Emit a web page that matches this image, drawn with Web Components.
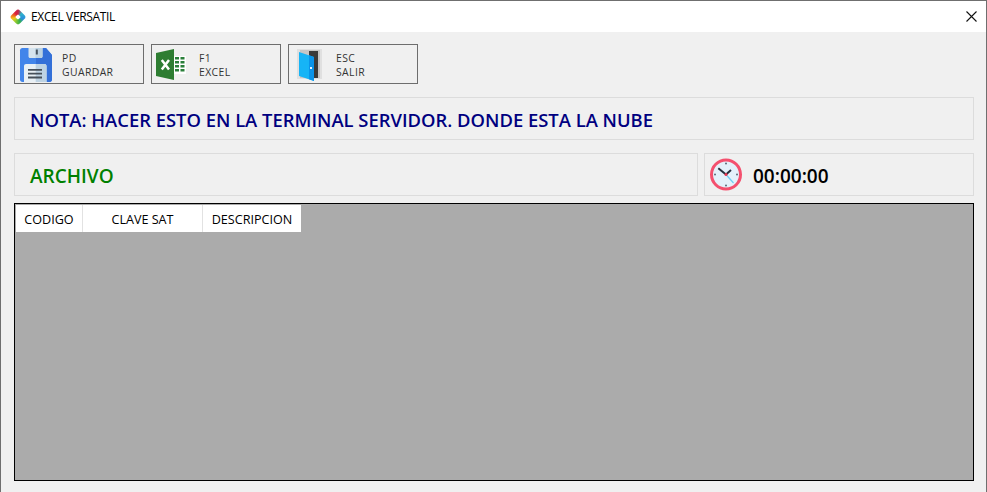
<!DOCTYPE html>
<html lang="es">
<head>
<meta charset="utf-8">
<title>EXCEL VERSATIL</title>
<style>
    html, body { margin: 0; height: 100%; }
    body { font-family: "Open Sans", "Noto Sans", sans-serif; background: #f0f0f0; }
</style>
</head>
<body>
<app-window>
    <title-bar slot="title">EXCEL VERSATIL</title-bar>
    <div slot="tools" style="display:flex;gap:7px">
        <tool-button key="PD" label="GUARDAR" icon="save"></tool-button>
        <tool-button key="F1" label="EXCEL" icon="excel"></tool-button>
        <tool-button key="ESC" label="SALIR" icon="door"></tool-button>
    </div>
    <info-panel slot="note" color="#000080">NOTA: HACER ESTO EN LA TERMINAL SERVIDOR. DONDE ESTA LA NUBE</info-panel>
    <info-panel slot="file" color="#008000" wide>ARCHIVO</info-panel>
    <clock-panel slot="clock">00:00:00</clock-panel>
    <data-grid slot="grid"></data-grid>
</app-window>

<script>
const icons = {
    save: `<svg width="34" height="36" viewBox="0 0 34 36">
        <g transform="translate(1 2)">
        <path d="M0 2.500C0 1.100 1 0 2.400 0H26l6 7v24.500c0 1.400-1 2.500-2.400 2.500H2.400C1 34 0 32.900 0 31.500z" fill="#4285ea"/>
        <path d="M16 0h10l6 7v24.500c0 1.400-1 2.500-2.400 2.500H16z" fill="#3470d8"/>
        <path d="M8.500 0h14v8.500c0 .9-.7 1.500-1.500 1.500H10c-.8 0-1.500-.6-1.500-1.500z" fill="#d6e4ee"/>
        <path d="M15.500 0h7v8.500c0 .9-.7 1.500-1.500 1.500h-5.500z" fill="#bcd2e2"/>
        <rect x="15.800" y="1.500" width="2" height="5" fill="#47535f"/>
        <path d="M4 34V18c0-1.100.9-2 2-2h18.500c1.100 0 2 .9 2 2v16z" fill="#e9f0f5"/>
        <path d="M15.700 16h8.800c1.100 0 2 .9 2 2v16H15.700z" fill="#bed3e3"/>
        <path d="M8 21h14v1.800H8zM8 24.800h14v1.800H8zM8 28.600h14v1.800H8z" fill="#47505a"/>
        </g>
    </svg>`,
    excel: `<svg width="31" height="32" viewBox="0 0 31 32">
        <path d="M18 8h12v18H18z" fill="#fff"/>
        <path d="M19 9h4v2.400h-4zM24.500 9h4v2.400h-4zM19 13h4v2.400h-4zM24.500 13h4v2.400h-4zM19 17h4v2.400h-4zM24.500 17h4v2.400h-4zM19 21h4v2.400h-4zM24.500 21h4v2.400h-4z" fill="#2a7f3a"/>
        <path d="M0 5 18 1v31L0 28z" fill="#2e7d32"/>
        <path d="M5.800 12 13 21.500M13 12 5.800 21.500" stroke="#fff" stroke-width="2.500" fill="none"/>
    </svg>`,
    door: `<svg width="30" height="34" viewBox="0 0 30 34">
        <rect x="4" y="2" width="25" height="30" fill="#e0e0e0"/>
        <rect x="7" y="3" width="20" height="28" fill="#c6c6c6"/>
        <rect x="16" y="4" width="9" height="27" fill="#3a3a3a"/>
        <path d="M6 5 21 10v24L6 29z" fill="#16b4f6"/>
        <path d="M16 8.300 21 10v24l-5-1.700z" fill="#0a94ea"/>
        <rect x="17" y="20" width="2" height="2" fill="#e8f6ff"/>
    </svg>`
};

const windowTemplate = document.createElement('template');
windowTemplate.innerHTML = `
    <style>
        :host {
            display: flex;
            flex-direction: column;
            box-sizing: border-box;
            height: 492px;
            border: 1px solid #6f6f6f;
            border-bottom: 0;
            background: #f0f0f0;
        }
        .body {
            flex: 1;
            display: flex;
            flex-direction: column;
            gap: 13px;
            padding: 12px 12px 11px 13px;
            min-height: 0;
        }
        .row { display: flex; gap: 6px; }
        ::slotted([slot="grid"]) { flex: 1; margin-top: -6px; }
    </style>
    <slot name="title"></slot>
    <div class="body">
        <slot name="tools"></slot>
        <slot name="note"></slot>
        <div class="row">
            <slot name="file"></slot>
            <slot name="clock"></slot>
        </div>
        <slot name="grid"></slot>
    </div>
`;

class AppWindow extends HTMLElement {
    constructor() {
        super();
        this.attachShadow({ mode: 'open' });
        this.shadowRoot.appendChild(windowTemplate.content.cloneNode(true));
    }
}

const titleTemplate = document.createElement('template');
titleTemplate.innerHTML = `
    <style>
        :host {
            display: flex;
            align-items: center;
            height: 31px;
            background: #fff;
            font-size: 12px;
            color: #000;
            padding-left: 9px;
            padding-right: 9px;
            flex: none;
        }
        svg { display: block; }
        .logo {
            width: 16px;
            height: 16px;
            display: flex;
            align-items: center;
            justify-content: center;
            flex: none;
        }
        .logo span {
            width: 12px;
            height: 12px;
            border-radius: 3px;
            transform: rotate(45deg);
            background: conic-gradient(#2fb3c8, #2a8fe0 18%, #35b04a 32%, #a6cf2c 48%, #f4c21e 58%, #ee7a1c 66%, #dc1f3c 78%, #c4264a 88%, #2fb3c8);
            display: flex;
            align-items: center;
            justify-content: center;
        }
        .logo span::after {
            content: "";
            width: 4px;
            height: 4px;
            border-radius: 1px;
            background: #fff;
        }
        .text { margin-left: 5px; flex: 1; letter-spacing: -0.35px; }
    </style>
    <div class="logo"><span></span></div>
    <span class="text"><slot></slot></span>
    <svg width="11" height="11" viewBox="0 0 11 11"><path d="M.5.5l10 10M10.500.5l-10 10" stroke="#111" stroke-width="1.100" fill="none"/></svg>
`;

class TitleBar extends HTMLElement {
    constructor() {
        super();
        this.attachShadow({ mode: 'open' });
        this.shadowRoot.appendChild(titleTemplate.content.cloneNode(true));
    }
}

const toolTemplate = document.createElement('template');
toolTemplate.innerHTML = `
    <style>
        :host {
            display: flex;
            align-items: center;
            box-sizing: border-box;
            width: 130px;
            height: 40px;
            border: 1px solid #6d6d6d;
            background: #f0f0f0;
            font-size: 10.4px;
            letter-spacing: 0.4px;
            line-height: 14px;
            color: #333;
        }
        .icon { width: 47px; padding-left: 4px; box-sizing: border-box; flex: none; display: flex; }
        .text { padding-top: 1px; }
    </style>
    <div class="icon"></div>
    <div class="text"><div class="key"></div><div class="label"></div></div>
`;

class ToolButton extends HTMLElement {
    constructor() {
        super();
        this.attachShadow({ mode: 'open' });
        this.shadowRoot.appendChild(toolTemplate.content.cloneNode(true));
        this.shadowRoot.querySelector('.icon').innerHTML = icons[this.getAttribute('icon')];
        this.shadowRoot.querySelector('.key').textContent = this.getAttribute('key');
        this.shadowRoot.querySelector('.label').textContent = this.getAttribute('label');
    }
}

const panelTemplate = document.createElement('template');
panelTemplate.innerHTML = `
    <style>
        :host {
            display: flex;
            align-items: center;
            box-sizing: border-box;
            height: 43px;
            border: 1px solid #dcdcdc;
            padding: 2px 0 0 15px;
            font-size: 18.4px;
            font-weight: 600;
        }
        :host([wide]) { width: 684px; font-size: 19px; }
    </style>
    <slot></slot>
`;

class InfoPanel extends HTMLElement {
    constructor() {
        super();
        this.attachShadow({ mode: 'open' });
        this.shadowRoot.appendChild(panelTemplate.content.cloneNode(true));
        this.style.color = this.getAttribute('color');
    }
}

const clockTemplate = document.createElement('template');
clockTemplate.innerHTML = `
    <style>
        :host {
            display: flex;
            align-items: center;
            box-sizing: border-box;
            width: 270px;
            height: 43px;
            border: 1px solid #dcdcdc;
            padding-left: 5px;
            gap: 10px;
            font-size: 19px;
            font-weight: 600;
            color: #000;
        }
        svg { flex: none; display: block; }
        .time { padding-top: 2px; }
    </style>
    <svg width="33" height="33" viewBox="0 0 33 33">
        <circle cx="16" cy="16.500" r="14.500" fill="#e4f1fa" stroke="#f4506e" stroke-width="3"/>
        <circle cx="16" cy="5.500" r="1" fill="#5a6a78"/>
        <circle cx="16" cy="27.500" r="1" fill="#5a6a78"/>
        <circle cx="5" cy="16.500" r="1" fill="#5a6a78"/>
        <circle cx="27" cy="16.500" r="1" fill="#5a6a78"/>
        <path d="M16 16.500 23.500 25" stroke="#6fcdf2" stroke-width="1.200"/>
        <path d="M16 16.500 8.300 10.300" stroke="#26303c" stroke-width="2"/>
        <path d="M16 16.500 21 12" stroke="#26303c" stroke-width="2"/>
        <circle cx="16" cy="16.500" r="1.500" fill="#e8344e"/>
    </svg>
    <span class="time"><slot></slot></span>
`;

class ClockPanel extends HTMLElement {
    constructor() {
        super();
        this.attachShadow({ mode: 'open' });
        this.shadowRoot.appendChild(clockTemplate.content.cloneNode(true));
    }
}

const gridTemplate = document.createElement('template');
gridTemplate.innerHTML = `
    <style>
        :host {
            display: block;
            box-sizing: border-box;
            border: 1px solid #000;
            background: #ababab;
            min-height: 0;
            padding: 1px;
        }
        .head {
            display: flex;
            width: fit-content;
            height: 27px;
            background: #fff;
            font-size: 12.6px;
            color: #000;
        }
        .head div {
            display: flex;
            align-items: center;
            justify-content: center;
            box-sizing: border-box;
            padding-top: 1px;
            border-right: 1px solid #e2e2e2;
        }
        .head div:last-child { border-right: 0; }
    </style>
    <div class="head">
        <div style="width:67px">CODIGO</div>
        <div style="width:120px">CLAVE SAT</div>
        <div style="width:98px">DESCRIPCION</div>
    </div>
`;

class DataGrid extends HTMLElement {
    constructor() {
        super();
        this.attachShadow({ mode: 'open' });
        this.shadowRoot.appendChild(gridTemplate.content.cloneNode(true));
    }
}

window.customElements.define('app-window', AppWindow);
window.customElements.define('title-bar', TitleBar);
window.customElements.define('tool-button', ToolButton);
window.customElements.define('info-panel', InfoPanel);
window.customElements.define('clock-panel', ClockPanel);
window.customElements.define('data-grid', DataGrid);
</script>
</body>
</html>
